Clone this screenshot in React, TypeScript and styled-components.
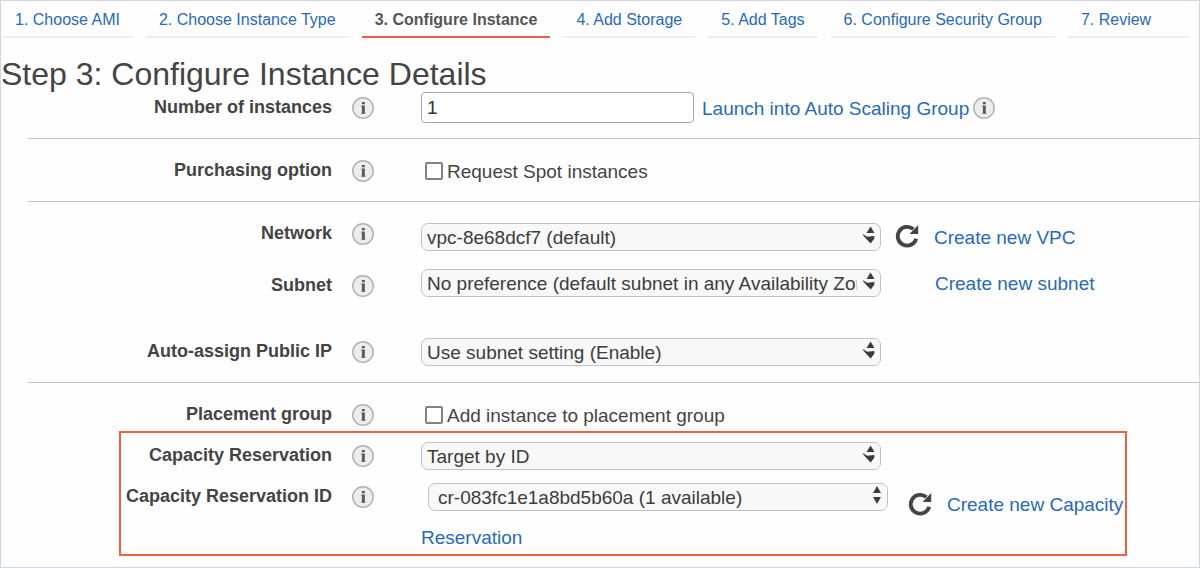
import React from "react";
import styled, { createGlobalStyle } from "styled-components";

const GlobalStyle = createGlobalStyle`
  *, *::before, *::after { box-sizing: border-box; }
  body {
    margin: 0;
    background: #fff;
    color: #444;
    font-family: "Liberation Sans", Arial, sans-serif;
    font-size: 19px;
  }
`;

const Page = styled.div`
  min-height: 100vh;
  border: 1px solid #d1d6dc;
  background: #fefefe;
`;

const Tabs = styled.nav`
  display: flex;
  gap: 13px;
  padding: 0 10px 0 1px;
`;

const Tab = styled.a<{ $active?: boolean; $grow?: boolean }>`
  flex: ${(p) => (p.$grow ? "1 0 auto" : "0 0 auto")};
  height: 37px;
  padding: 0 13px;
  border-bottom: 2px solid ${(p) => (p.$active ? "#f15b40" : "#eee")};
  color: ${(p) => (p.$active ? "#555" : "#2a6ab4")};
  font-size: 16px;
  font-weight: ${(p) => (p.$active ? 700 : 400)};
  line-height: 37px;
  text-decoration: none;
  white-space: nowrap;
`;

const Title = styled.h1`
  margin: 19px 0 0;
  font-size: 32px;
  font-weight: 400;
  line-height: 35px;
`;

const Section = styled.section<{ $first?: boolean; $last?: boolean }>`
  display: flex;
  flex-direction: column;
  margin-left: 27px;
  padding: ${(p) => (p.$first ? "0 0 15px" : p.$last ? "18px 0 11px" : "18px 0 16px")};
  border-top: ${(p) => (p.$first ? "none" : "1px solid #c3c6c8")};
`;

const Highlight = styled.div`
  margin: 2px 72px 0 91px;
  padding-top: 9px;
  border: 2px solid #f0603f;
`;

type Align = "start" | "center" | "end";

const Row = styled.div<{
  $inset?: boolean;
  $height?: number;
  $space?: number;
  $label?: Align;
}>`
  display: grid;
  grid-template-columns: ${(p) => (p.$inset ? 211 : 304)}px 22px minmax(0, 1fr);
  column-gap: 20px;
  align-items: ${(p) => p.$label ?? "center"};
  min-height: ${(p) => p.$height ?? 28}px;
  margin-top: ${(p) => p.$space ?? 0}px;
`;

const RowLabel = styled.label`
  height: 28px;
  padding-bottom: 2px;
  font-size: 18px;
  font-weight: 700;
  line-height: 26px;
  text-align: right;
  white-space: nowrap;
`;

const Controls = styled.div<{ $align?: Align }>`
  display: flex;
  align-items: center;
  align-self: ${(p) => p.$align ?? "center"};
  padding-left: 27px;
`;

const FlowControls = styled.div`
  padding-left: 27px;
  line-height: 33px;
`;

const InfoButton = styled.button`
  display: flex;
  align-items: center;
  width: 22px;
  height: 28px;
  padding: 0;
  border: 0;
  background: none;
`;

const LinkInfo = styled.span`
  margin-left: 4px;
`;

const TextInput = styled.input`
  width: 273px;
  height: 31px;
  padding: 0 5px;
  border: 1px solid #a4a6a8;
  border-radius: 4px;
  background: #fff;
  color: #333;
  font: inherit;
`;

const Check = styled.input`
  appearance: none;
  width: 18px;
  height: 18px;
  margin: 0 4px;
  border: 2px solid #808285;
  border-radius: 2px;
  background: #fff;
`;

const CheckLabel = styled.label`
  padding-top: 2px;
  line-height: 26px;
`;

const Link = styled.a<{ $space?: number }>`
  margin-left: ${(p) => p.$space ?? 0}px;
  padding-top: 2px;
  color: #2a6ab4;
  text-decoration: none;
`;

const SelectFrame = styled.span<{ $raised?: boolean }>`
  position: relative;
  display: inline-block;
  width: 460px;
  height: 28px;
  margin-left: ${(p) => (p.$raised ? 7 : 0)}px;
  line-height: 26px;
  vertical-align: ${(p) => (p.$raised ? "7px" : "baseline")};

  svg {
    position: absolute;
    top: 3px;
    right: 5px;
    pointer-events: none;
  }
`;

const SelectBox = styled.select<{ $pad: number }>`
  appearance: none;
  width: 100%;
  height: 28px;
  padding: 2px 23px 0 ${(p) => p.$pad}px;
  border: 1px solid #bfc3c7;
  border-radius: 7px;
  background: #f8f8f8;
  color: #3c3c3c;
  font: inherit;
  line-height: 24px;
`;

const RefreshButton = styled.button<{ $space: number }>`
  width: 24px;
  height: 24px;
  margin: 0 15px 2px ${(p) => p.$space}px;
  padding: 0;
  border: 0;
  background: none;
  line-height: 0;
  vertical-align: -5px;
`;

function Info({ topic }: { topic: string }) {
  return (
    <InfoButton type="button" aria-label={`About ${topic}`}>
      <svg width="22" height="22" viewBox="0 0 22 22" aria-hidden="true">
        <circle cx="11" cy="11" r="10.2" fill="#ededed" stroke="#b0b2b4" strokeWidth="1.5" />
        <path d="M8.8 8.800h2v1h-2zM8.800 15.800h5v1h-5z" fill="#a5a5a5" />
        <path d="M9.900 5h2.900v2.300h-2.900zM9.900 8.600h2.900v8.200h-2.900z" fill="#585858" />
      </svg>
    </InfoButton>
  );
}

function Refresh({ label, space }: { label: string; space: number }) {
  return (
    <RefreshButton type="button" aria-label={label} $space={space}>
      <svg width="24" height="24" viewBox="0 0 24 24" aria-hidden="true">
        <path d="M21.200 14.800A9.400 9.400 0 1 1 18.400 5.200" fill="none" stroke="#444" strokeWidth="3.800" />
        <path d="M23.200 1v9h-8.700z" fill="#444" />
      </svg>
    </RefreshButton>
  );
}

function SelectField({
  id,
  text,
  plain,
}: {
  id: string;
  text: string;
  plain?: boolean;
}) {
  return (
    <SelectFrame $raised={plain}>
      <SelectBox id={id} $pad={plain ? 9 : 5}>
        <option>{text}</option>
      </SelectBox>
      <svg width="14" height="20" viewBox="0 0 14 20" aria-hidden="true">
        {plain ? (
          <path d="M8 0l4 7H4zM4 11h8l-4 7z" fill="#3c3c3c" />
        ) : (
          <>
            <path d="M8.500 .5l4 6.500h-8z" fill="#3c3c3c" />
            <path d="M1.200 8.300l4 2.500 7.200-.8v2.600L8.700 17.500 5 13.800 1 9.300z" fill="#3c3c3c" />
          </>
        )}
      </svg>
    </SelectFrame>
  );
}

const steps = [
  "1. Choose AMI",
  "2. Choose Instance Type",
  "3. Configure Instance",
  "4. Add Storage",
  "5. Add Tags",
  "6. Configure Security Group",
  "7. Review",
];

export default function App() {
  return (
    <Page>
      <GlobalStyle />
      <Tabs aria-label="Launch steps">
        {steps.map((step, i) => (
          <Tab
            key={step}
            href={`#step-${i + 1}`}
            $active={i === 2}
            $grow={i === steps.length - 1}
            aria-current={i === 2 ? "step" : undefined}
          >
            {step}
          </Tab>
        ))}
      </Tabs>
      <main>
        <Title>Step 3: Configure Instance Details</Title>

        <Section $first>
          <Row $height={31}>
            <RowLabel htmlFor="count">Number of instances</RowLabel>
            <Info topic="number of instances" />
            <Controls>
              <TextInput id="count" type="text" defaultValue="1" />
              <Link href="#auto-scaling" $space={8}>
                Launch into Auto Scaling Group
              </Link>
              <LinkInfo>
                <Info topic="Auto Scaling" />
              </LinkInfo>
            </Controls>
          </Row>
        </Section>

        <Section>
          <Row>
            <RowLabel htmlFor="spot">Purchasing option</RowLabel>
            <Info topic="purchasing option" />
            <Controls>
              <Check id="spot" type="checkbox" />
              <CheckLabel htmlFor="spot">Request Spot instances</CheckLabel>
            </Controls>
          </Row>
        </Section>

        <Section>
          <Row $height={31} $label="start">
            <RowLabel htmlFor="network">Network</RowLabel>
            <Info topic="network" />
            <Controls $align="end">
              <SelectField id="network" text="vpc-8e68dcf7 (default)" />
              <Refresh label="Refresh networks" space={14} />
              <Link href="#vpc">Create new VPC</Link>
            </Controls>
          </Row>
          <Row $height={31} $space={18} $label="end">
            <RowLabel htmlFor="subnet">Subnet</RowLabel>
            <Info topic="subnet" />
            <Controls $align="start">
              <SelectField
                id="subnet"
                text="No preference (default subnet in any Availability Zone)"
              />
              <Link href="#subnet-new" $space={54}>
                Create new subnet
              </Link>
            </Controls>
          </Row>
          <Row $space={38}>
            <RowLabel htmlFor="public-ip">Auto-assign Public IP</RowLabel>
            <Info topic="public IP" />
            <Controls>
              <SelectField id="public-ip" text="Use subnet setting (Enable)" />
            </Controls>
          </Row>
        </Section>

        <Section $last>
          <Row>
            <RowLabel htmlFor="placement">Placement group</RowLabel>
            <Info topic="placement group" />
            <Controls>
              <Check id="placement" type="checkbox" />
              <CheckLabel htmlFor="placement">Add instance to placement group</CheckLabel>
            </Controls>
          </Row>
          <Highlight>
            <Row $inset>
              <RowLabel htmlFor="reservation">Capacity Reservation</RowLabel>
              <Info topic="capacity reservation" />
              <Controls>
                <SelectField id="reservation" text="Target by ID" />
              </Controls>
            </Row>
            <Row $inset $space={13} $label="start">
              <RowLabel htmlFor="reservation-id">Capacity Reservation ID</RowLabel>
              <Info topic="capacity reservation ID" />
              <FlowControls>
                <SelectField id="reservation-id" text="cr-083fc1e1a8bd5b60a (1 available)" plain />
                <Refresh label="Refresh reservations" space={20} />
                <Link href="#reservation-new">Create new Capacity Reservation</Link>
              </FlowControls>
            </Row>
          </Highlight>
        </Section>
      </main>
    </Page>
  );
}
